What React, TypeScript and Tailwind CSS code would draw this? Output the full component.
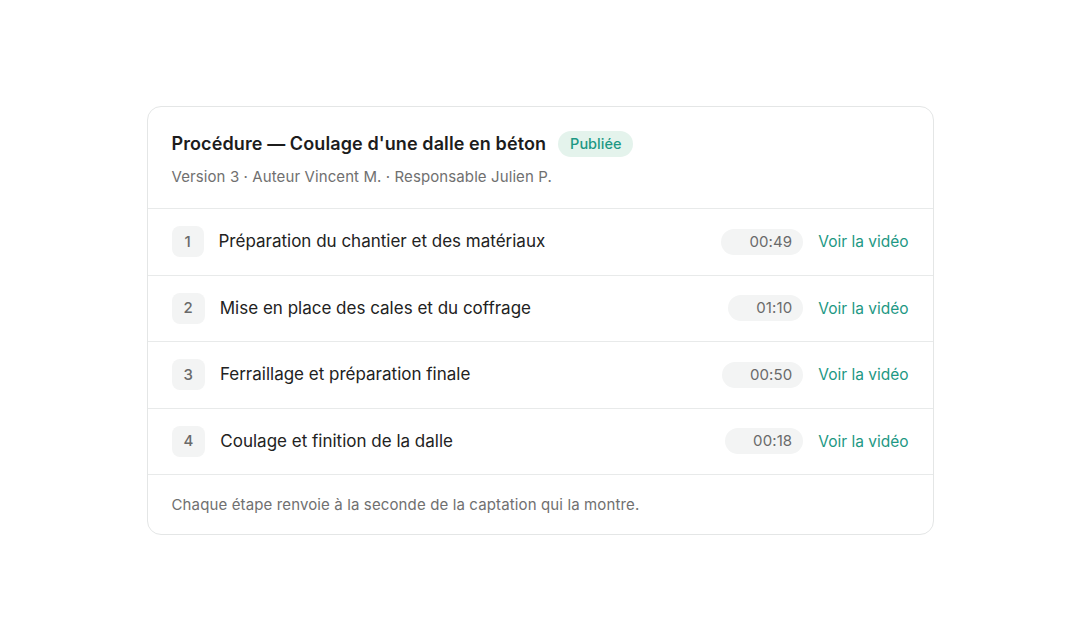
import React from 'react'

const steps = [
  { n: 1, title: 'Préparation du chantier et des matériaux', time: '00:49' },
  { n: 2, title: 'Mise en place des cales et du coffrage', time: '01:10' },
  { n: 3, title: 'Ferraillage et préparation finale', time: '00:50' },
  { n: 4, title: 'Coulage et finition de la dalle', time: '00:18' },
]

export default function App() {
  return (
    <div
      className="min-h-screen w-full bg-white flex justify-center pt-[106px]"
      style={{ fontFamily: 'Inter, "Noto Sans", sans-serif' }}
    >
      <div className="w-[787px] h-fit rounded-[14px] border border-[#e4e6e6] bg-white">
        {/* Header */}
        <div className="px-6 pt-6 pb-[20px] border-b border-[#e8eaea]">
          <div className="flex items-center gap-3">
            <h1 className="text-[18px] leading-[26px] font-semibold tracking-[0.1px] text-[#1c1c1c]">
              Procédure — Coulage d'une dalle en béton
            </h1>
            <span className="rounded-full bg-[#e4f3ec] px-3 h-[26px] flex items-center text-[14.5px] font-medium text-[#1d9884]">
              Publiée
            </span>
          </div>
          <p className="mt-[9px] text-[15px] leading-[22px] tracking-[0.1px] text-[#707070]">
            Version 3 · Auteur Vincent M. · Responsable Julien P.
          </p>
        </div>

        {/* Steps */}
        {steps.map((s) => (
          <div
            key={s.n}
            className="flex items-center h-[66.5px] px-6 border-b border-[#e8eaea]"
          >
            <div className="h-[31px] min-w-[32px] px-3 rounded-lg bg-[#f3f4f4] flex items-center justify-center text-[15px] font-medium text-[#6a6a6a]">
              {s.n}
            </div>
            <div className="ml-[15px] flex-1 text-[17px] text-[#222222]">{s.title}</div>
            <div className="h-[26px] rounded-full bg-[#f3f4f4] pl-7 pr-[11px] flex items-center text-[15px] tracking-[0.1px] text-[#6a6a6a]">
              {s.time}
            </div>
            <a className="ml-[15px] text-[15.5px] font-normal text-[#1d9884] cursor-pointer">
              Voir la vidéo
            </a>
          </div>
        ))}

        {/* Footer */}
        <div className="px-6 pt-[19px] pb-[18px]">
          <p className="text-[15px] leading-[22px] tracking-[0.13px] text-[#707070]">
            Chaque étape renvoie à la seconde de la captation qui la montre.
          </p>
        </div>
      </div>
    </div>
  )
}
